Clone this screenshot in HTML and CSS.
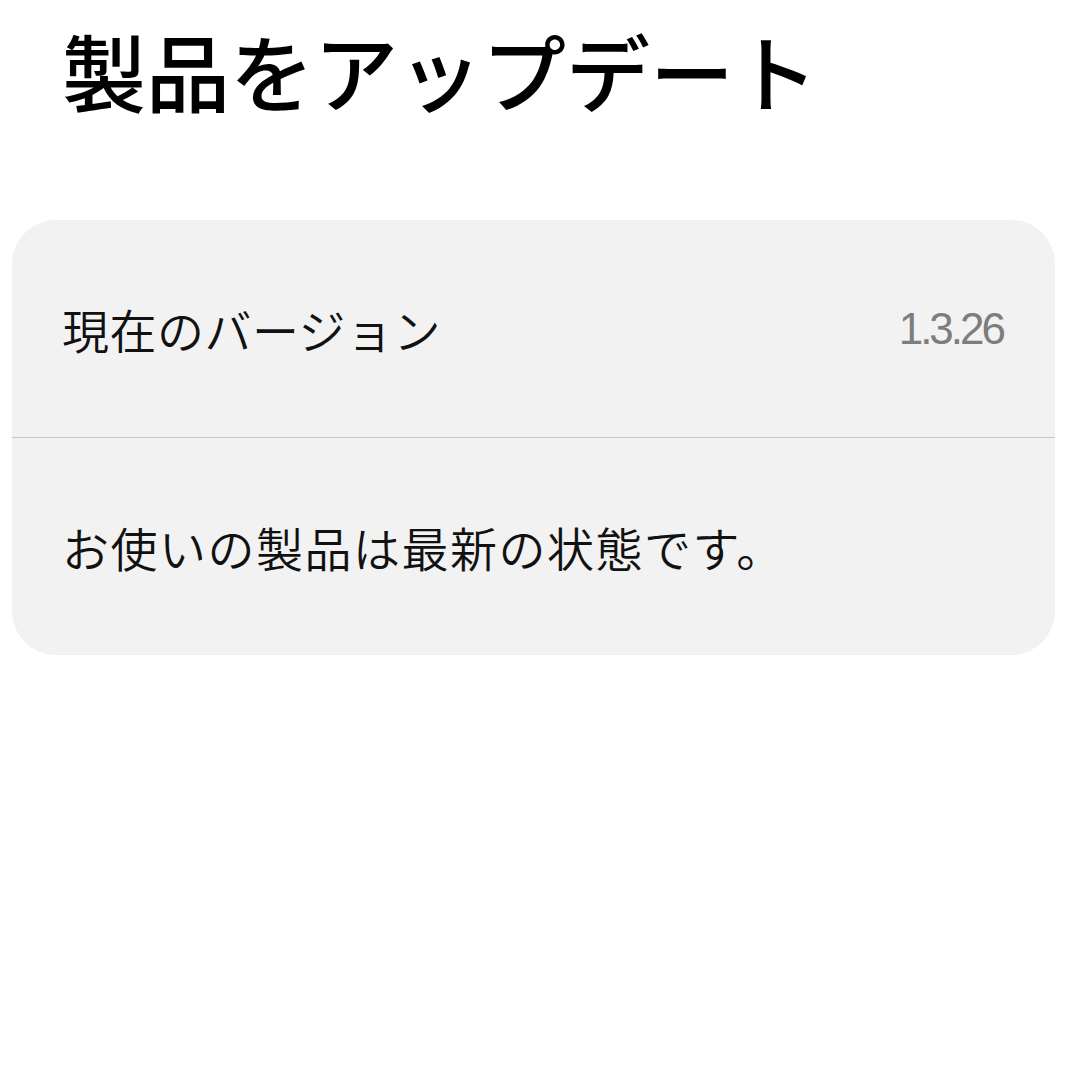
FILE: index.html
```html
<!DOCTYPE html>
<html lang="ja">
<head>
    <meta charset="UTF-8">
    <meta name="viewport" content="width=device-width, initial-scale=1.0">
    <title>製品をアップデート</title>
    <link rel="stylesheet" href="styles.css">
</head>
<body>
    <header class="top">
        <h1 class="titulo">製品をアップデート</h1>
    </header>
    <section class="cartao">
        <div class="linha">
            <span class="rotulo">現在のバージョン</span>
            <span class="versao">1.3.26</span>
        </div>
        <div class="linha">
            <span class="rotulo estado">お使いの製品は最新の状態です。</span>
        </div>
    </section>
</body>
</html>
```

FILE: styles.css
```css
body {
    margin: 0;
    background: #ffffff;
    font-family: "Noto Sans CJK JP", "Noto Sans", sans-serif;
    color: #111111;
}
.top {
    padding: 20px 0 0 62px;
    height: 198px;
    box-sizing: border-box;
}
.titulo {
    margin: 0;
    font-size: 84px;
    font-weight: 500;
    line-height: 1.2;
    color: #000000;
}
.cartao {
    margin: 22px 25px 0 12px;
    background: #f2f2f2;
    border-radius: 44px;
    overflow: hidden;
}
.linha {
    height: 217px;
    padding: 0 52px 0 50px;
    display: flex;
    align-items: center;
    justify-content: space-between;
}
.linha + .linha {
    border-top: 1px solid #c6c6c6;
}
.rotulo {
    font-size: 47px;
    font-weight: 350;
    letter-spacing: 0.5px;
}
.estado {
    letter-spacing: 1.5px;
}
.versao {
    font-family: "Liberation Sans", Arial, sans-serif;
    font-size: 44px;
    color: #7d7d7d;
    letter-spacing: -3px;
}
```
